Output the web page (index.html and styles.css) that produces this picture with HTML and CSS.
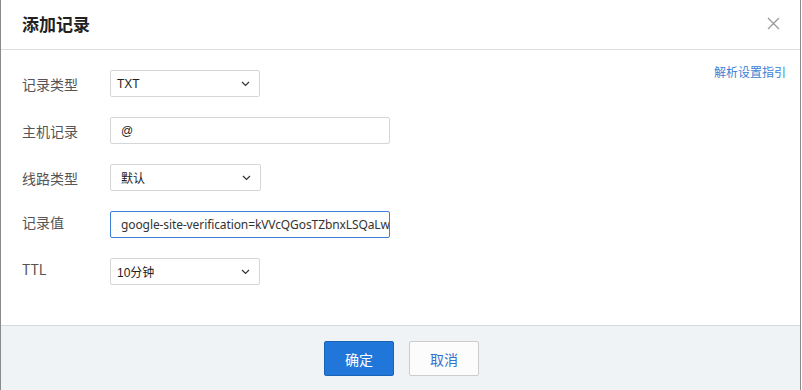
FILE: index.html
```html
<!DOCTYPE html>
<html lang="zh-CN">
<head>
    <meta charset="UTF-8">
    <meta name="viewport" content="width=device-width, initial-scale=1.0">
    <title>添加记录</title>
    <link rel="stylesheet" href="styles.css">
</head>
<body>
    <div class="dialog">
        <div class="dialog-header">
            <h2>添加记录</h2>
            <button class="close-btn" aria-label="关闭">
                <svg width="13" height="13" viewBox="0 0 13 13">
                    <path d="M1 1 L12 12 M12 1 L1 12" stroke="#9a9a9a" stroke-width="1.3" fill="none"/>
                </svg>
            </button>
        </div>

        <div class="form">
            <div class="row">
                <label>记录类型</label>
                <div class="select">
                    <span>TXT</span>
                    <svg class="chevron" width="9" height="6" viewBox="0 0 9 6"><path d="M1 1 L4.5 4.5 L8 1" stroke="#333" stroke-width="1.2" fill="none"/></svg>
                </div>
                <a class="guide" href="#">解析设置指引</a>
            </div>
            <div class="row">
                <label>主机记录</label>
                <div class="input"><span class="pad">@</span></div>
            </div>
            <div class="row">
                <label>线路类型</label>
                <div class="select wide">
                    <span class="pad">默认</span>
                    <svg class="chevron" width="9" height="6" viewBox="0 0 9 6"><path d="M1 1 L4.5 4.5 L8 1" stroke="#333" stroke-width="1.2" fill="none"/></svg>
                </div>
            </div>
            <div class="row">
                <label class="up">记录值</label>
                <div class="input active"><span class="value">google-site-verification=kVVcQGosTZbnxLSQaLw</span></div>
            </div>
            <div class="row">
                <label class="up">TTL</label>
                <div class="select">
                    <span>10分钟</span>
                    <svg class="chevron" width="9" height="6" viewBox="0 0 9 6"><path d="M1 1 L4.5 4.5 L8 1" stroke="#333" stroke-width="1.2" fill="none"/></svg>
                </div>
            </div>
        </div>

        <div class="dialog-footer">
            <button class="btn primary">确定</button>
            <button class="btn">取消</button>
        </div>
    </div>
</body>
</html>
```

FILE: styles.css
```css
* {
    margin: 0;
    padding: 0;
    box-sizing: border-box;
}

body {
    font-family: "Liberation Sans", "Noto Sans CJK SC", sans-serif;
    background: #fff;
    width: 802px;
    height: 390px;
    overflow: hidden;
}

.dialog {
    width: 801px;
    height: 390px;
    border-left: 1px solid #8a8a8a;
    border-right: 1px solid #8a8a8a;
    background: #fff;
    display: flex;
    flex-direction: column;
}

.dialog-header {
    height: 50px;
    border-bottom: 1px solid #dcdcdc;
    display: flex;
    align-items: center;
    justify-content: space-between;
    padding: 0 20px 2px 21px;
}

.dialog-header h2 {
    font-family: "Noto Sans CJK SC", sans-serif;
    font-size: 17px;
    font-weight: 700;
    color: #222;
}

.close-btn {
    border: none;
    background: none;
    width: 13px;
    height: 13px;
    display: flex;
}

.form {
    padding: 20px 14px 40px 21px;
    display: flex;
    flex-direction: column;
    gap: 20px;
}

.row {
    display: flex;
    align-items: center;
    height: 27px;
}

.row label {
    width: 88px;
    font-family: "Noto Sans CJK SC", sans-serif;
    font-size: 14px;
    color: #555;
}

.row label.up {
    margin-top: -6px;
}

.select, .input {
    height: 27px;
    border: 1px solid #d6d6d6;
    border-radius: 2px;
    background: #fff;
    display: flex;
    align-items: center;
    font-size: 12px;
    color: #222;
}

.select {
    width: 150px;
    padding: 0 9px 0 6px;
    justify-content: space-between;
}

.select.wide {
    width: 151px;
}

.select span, .input span {
    font-family: "Liberation Sans", "Noto Sans CJK SC", sans-serif;
}

.pad {
    padding-left: 4px;
}

.input {
    width: 280px;
    padding: 0 6px;
    overflow: hidden;
    white-space: nowrap;
}

.input.active {
    border-color: #3b7fd6;
    padding-left: 10px;
}

.input .value {
    font-family: "Noto Sans", sans-serif;
    font-size: 12px;
    letter-spacing: -0.1px;
    color: #333;
}

.chevron {
    flex-shrink: 0;
}

.guide {
    margin-left: auto;
    align-self: flex-start;
    margin-top: -7px;
    font-family: "Noto Sans CJK SC", sans-serif;
    font-size: 12px;
    color: #3b7fd6;
    text-decoration: none;
}

.dialog-footer {
    flex: 1;
    border-top: 1px solid #d6d9dc;
    background: #eff3f6;
    display: flex;
    justify-content: center;
    align-items: flex-start;
    gap: 15px;
    padding: 15px 0 0 2px;
}

.btn {
    width: 70px;
    height: 35px;
    border: 1px solid #cccccc;
    border-radius: 2px;
    background: #fcfcfc;
    color: #3473d0;
    font-family: "Noto Sans CJK SC", sans-serif;
    font-size: 14px;
}

.btn.primary {
    background: #2177d9;
    border-color: #1a62b5;
    color: #fff;
}
```
